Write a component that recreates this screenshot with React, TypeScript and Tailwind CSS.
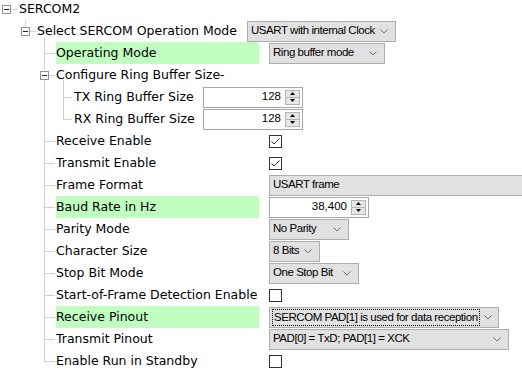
import React from "react";

const DOT = "#a0a0a0";

type Seg = { x1: number; y1: number; x2: number; y2: number };

// tree gutter drawn per row: dotted connectors and +/- boxes
function Gutter({ width, segs, boxX }: { width: number; segs: Seg[]; boxX?: number }) {
  return (
    <svg width={width} height={22} className="shrink-0 overflow-visible">
      {segs.map((s, i) => (
        <line
          key={i}
          x1={s.x1 + 0.5}
          y1={s.y1 + 0.5}
          x2={s.x2 + 0.5}
          y2={s.y2 + 0.5}
          stroke={DOT}
          strokeWidth={1}
          strokeDasharray="1 1"
        />
      ))}
      {boxX !== undefined && (
        <g>
          <rect x={boxX + 0.5} y={7.5} width={8} height={8} fill="#fff" stroke="#919191" />
          <line x1={boxX + 2} y1={11.5} x2={boxX + 7} y2={11.5} stroke="#222" />
        </g>
      )}
    </svg>
  );
}

function Chevron() {
  return (
    <svg width={8} height={5} className="shrink-0">
      <polyline points="0.5,0.5 4,4 7.5,0.5" fill="none" stroke="#707070" strokeWidth={1} />
    </svg>
  );
}

function Dropdown({ text, w, focus }: { text: string; w: string; focus?: boolean }) {
  return (
    <div className={`${w} h-[21px] flex items-center justify-between gap-[4px] bg-[#e1e1e1] border border-[#adadad] pl-[2px] pr-[7px] font-['Liberation_Sans',sans-serif] text-[11.5px] tracking-[-0.45px] text-black whitespace-nowrap overflow-hidden`}>
      <span className={focus ? "border border-dotted border-black px-px leading-[15px]" : "pl-px"}>{text}</span>
      <Chevron />
    </div>
  );
}

function Spin({ value, w }: { value: string; w: string }) {
  return (
    <div className={`${w} h-[21px] flex items-center bg-white border border-[#a6a6a6] pr-[2px] font-['Liberation_Sans',sans-serif] text-[11.5px] text-black`}>
      <span className="flex-1 text-right pr-[4px]">{value}</span>
      <div className="flex flex-col w-[15px] h-[15px]">
        <div className="flex-1 flex items-center justify-center bg-[#e6e6e6] border border-[#b4b4b4]">
          <svg width={5} height={3}>
            <polygon points="2.5,0 5,3 0,3" fill="#000" />
          </svg>
        </div>
        <div className="flex-1 flex items-center justify-center bg-[#e6e6e6] border border-[#b4b4b4] border-t-0">
          <svg width={5} height={3}>
            <polygon points="0,0 5,0 2.5,3" fill="#000" />
          </svg>
        </div>
      </div>
    </div>
  );
}

function Check({ on }: { on?: boolean }) {
  return (
    <div className="w-[13px] h-[13px] border border-[#333] bg-white flex items-center justify-center">
      {on && (
        <svg width={11} height={11}>
          <polyline points="1.5,5.5 4,8 9.5,2.5" fill="none" stroke="#333" strokeWidth={1} />
        </svg>
      )}
    </div>
  );
}

type Item = {
  label: string;
  green?: boolean;
  value: React.ReactNode;
  last?: boolean;
};

const level2: Item[] = [
  { label: "Receive Enable", value: <Check on /> },
  { label: "Transmit Enable", value: <Check on /> },
  {
    label: "Frame Format",
    value: (
      <div className="w-[260px] h-[21px] flex items-center bg-[#e1e1e1] border border-[#adadad] border-r-0 pl-[3px] font-['Liberation_Sans',sans-serif] text-[11.5px] tracking-[-0.45px]">
        USART frame
      </div>
    ),
  },
  { label: "Baud Rate in Hz", green: true, value: <Spin value="38,400" w="w-[100px]" /> },
  { label: "Parity Mode", value: <Dropdown text="No Parity" w="w-[80px]" /> },
  { label: "Character Size", value: <Dropdown text="8 Bits" w="w-[51px]" /> },
  { label: "Stop Bit Mode", value: <Dropdown text="One Stop Bit" w="w-[90px]" /> },
  { label: "Start-of-Frame Detection Enable", value: <Check /> },
  {
    label: "Receive Pinout",
    green: true,
    value: <Dropdown text="SERCOM PAD[1] is used for data reception" w="w-[230px]" focus />,
  },
  { label: "Transmit Pinout", value: <Dropdown text="PAD[0] = TxD; PAD[1] = XCK" w="w-[240px]" /> },
  { label: "Enable Run in Standby", value: <Check />, last: true },
];

function Label({ text, green, w }: { text: string; green?: boolean; w: string }) {
  return (
    <div className={`${w} h-[22px] shrink-0 flex items-center whitespace-nowrap ${green ? "bg-[#c0ffc0]" : ""}`}>
      {text}
    </div>
  );
}

function L2Row({ item }: { item: Item }) {
  return (
    <div className="flex items-center h-[22px]">
      <Gutter
        width={56}
        segs={[
          { x1: 44, y1: 0, x2: 44, y2: item.last ? 11 : 22 },
          { x1: 45, y1: 11, x2: 54, y2: 11 },
        ]}
      />
      <Label text={item.label} green={item.green} w="w-[203px]" />
      <div className="ml-[10px] flex items-center">{item.value}</div>
    </div>
  );
}

function L3Row({ label, value, last }: { label: string; value: string; last?: boolean }) {
  return (
    <div className="flex items-center h-[22px]">
      <Gutter
        width={74}
        segs={[
          { x1: 44, y1: 0, x2: 44, y2: 22 },
          { x1: 63, y1: 0, x2: 63, y2: last ? 11 : 22 },
          { x1: 64, y1: 11, x2: 72, y2: 11 },
        ]}
      />
      <Label text={label} w="w-[129px]" />
      <Spin value={value} w="w-[100px]" />
    </div>
  );
}

export default function App() {
  return (
    <div className="w-[522px] h-[382px] bg-white overflow-hidden font-['DejaVu_Sans',sans-serif] text-[12.5px] text-black">
      <div className="-mt-[2px] flex flex-col">
        <div className="flex items-center h-[22px]">
          <Gutter width={19} boxX={2} segs={[{ x1: 11, y1: 11, x2: 17, y2: 11 }]} />
          <span>SERCOM2</span>
        </div>

        <div className="flex items-center h-[22px]">
          <Gutter
            width={37}
            boxX={21}
            segs={[
              { x1: 25, y1: 0, x2: 25, y2: 6 },
              { x1: 30, y1: 11, x2: 35, y2: 11 },
              { x1: 44, y1: 17, x2: 44, y2: 22 },
            ]}
          />
          <Label text="Select SERCOM Operation Mode" w="w-[210px]" />
          <Dropdown text="USART with internal Clock" w="w-[149px]" />
        </div>

        <L2Row item={{ label: "Operating Mode", green: true, value: <Dropdown text="Ring buffer mode" w="w-[116px]" /> }} />

        <div className="flex items-center h-[22px]">
          <Gutter
            width={56}
            boxX={40}
            segs={[
              { x1: 44, y1: 0, x2: 44, y2: 6 },
              { x1: 44, y1: 16, x2: 44, y2: 22 },
              { x1: 49, y1: 11, x2: 54, y2: 11 },
              { x1: 63, y1: 16, x2: 63, y2: 22 },
            ]}
          />
          <span>Configure Ring Buffer Size-</span>
        </div>

        <L3Row label="TX Ring Buffer Size" value="128" />
        <L3Row label="RX Ring Buffer Size" value="128" last />

        {level2.map((it) => (
          <L2Row key={it.label} item={it} />
        ))}
      </div>
    </div>
  );
}
